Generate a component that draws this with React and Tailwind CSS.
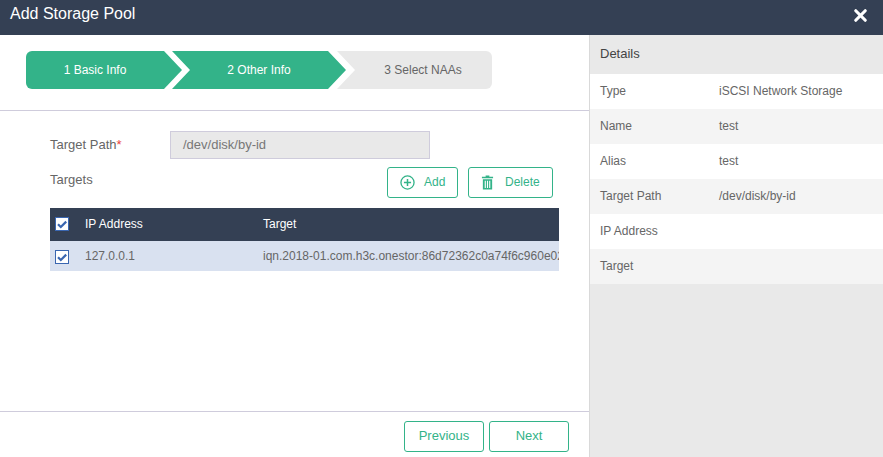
import { X } from "lucide-react";

const details = [
  ["Type", "iSCSI Network Storage"],
  ["Name", "test"],
  ["Alias", "test"],
  ["Target Path", "/dev/disk/by-id"],
  ["IP Address", ""],
  ["Target", ""],
];

function Checkbox() {
  return (
    <span className="flex h-[14px] w-[14px] items-center justify-center border border-[#3a66b0] bg-white">
      <svg viewBox="0 0 12 12" className="h-[12px] w-[12px]">
        <path d="M2 6.2 L4.8 9 L10.2 3.6" fill="none" stroke="#3a66b0" strokeWidth="2.2" />
      </svg>
    </span>
  );
}

function PlusIcon() {
  return (
    <svg viewBox="0 0 16 16" className="h-[15px] w-[15px]" fill="none" stroke="#33b389" strokeWidth="1.4">
      <circle cx="8" cy="8" r="7" />
      <path d="M8 4.2 V11.8 M4.2 8 H11.8" strokeWidth="1.6" />
    </svg>
  );
}

function TrashIcon() {
  return (
    <svg viewBox="0 0 14 16" className="h-[15px] w-[13px]" fill="#33b389">
      <path d="M5 0.5 H9 V1.8 H13 V3.4 H1 V1.8 H5 Z" />
      <path d="M2 4.5 H12 V15.5 H2 Z M4 6 V14 H5.2 V6 Z M6.4 6 V14 H7.6 V6 Z M8.8 6 V14 H10 V6 Z" fillRule="evenodd" />
    </svg>
  );
}

export default function App() {
  return (
    <div className="flex h-[457px] w-[883px] flex-col overflow-hidden bg-white font-['Liberation_Sans',Arial,sans-serif] text-[12px] text-[#666666]">
      <header className="flex h-[35px] shrink-0 items-center justify-between bg-[#344054] pl-[10px] pr-[14px] text-white">
        <h1 className="text-[16px] leading-[27px] mb-[8px]">Add Storage Pool</h1>
        <X size={19} strokeWidth={4} className="mb-[5px] -mr-[1px]" />
      </header>

      <div className="flex min-h-0 flex-1">
        <main className="flex w-[589px] shrink-0 flex-col">
          <div className="h-[76px] shrink-0 border-b border-[#cfccdc] pl-[26px] pt-[16px]">
            <div className="flex h-[38px] items-stretch">
              <div className="flex w-[156px] items-center justify-center rounded-l-[6px] bg-[#33b389] pr-[18px] text-white [clip-path:polygon(0_0,138px_0,156px_19px,138px_38px,0_38px)]">
                1 Basic Info
              </div>
              <div className="-ml-[10px] flex w-[174px] items-center justify-center bg-[#33b389] text-white [clip-path:polygon(0_0,156px_0,174px_19px,156px_38px,0_38px,18px_19px)]">
                2 Other Info
              </div>
              <div className="-ml-[9px] flex w-[155px] items-center justify-center rounded-r-[6px] bg-[#e9e9e9] pl-[17px] text-[#666666] [clip-path:polygon(0_0,155px_0,155px_38px,0_38px,18px_19px)]">
                3 Select NAAs
              </div>
            </div>
          </div>

          <div className="min-h-0 flex-1 pl-[50px] pr-[30px] pt-[20px]">
            <div className="flex h-[28px] items-center">
              <label className="w-[120px] text-[13px]">
                Target Path<span className="text-[#e8413c]">*</span>
              </label>
              <div className="flex h-[28px] w-[260px] items-center border border-[#cfccdc] bg-[#e9e9e9] pl-[12px] text-[13px] text-[#777777]">
                /dev/disk/by-id
              </div>
            </div>

            <div className="mt-[8px] flex h-[31px] items-start justify-between pr-[6px]">
              <span className="mt-[3px] text-[13px]">Targets</span>
              <div className="flex gap-[10px]">
                <button className="flex h-[31px] w-[71px] items-center gap-[9px] rounded-[3px] border border-[#33b389] pb-[1px] pl-[12px] text-[12px] text-[#33b389]">
                  <PlusIcon />
                  Add
                </button>
                <button className="flex h-[31px] w-[85px] items-center gap-[11px] rounded-[3px] border border-[#33b389] pb-[1px] pl-[12px] text-[12px] text-[#33b389]">
                  <TrashIcon />
                  Delete
                </button>
              </div>
            </div>

            <div className="mt-[10px] w-[509px] overflow-hidden">
              <div className="flex h-[33px] items-center bg-[#344054] text-white">
                <div className="flex w-[35px] shrink-0 pb-[1px] pl-[5px]">
                  <Checkbox />
                </div>
                <div className="w-[178px] shrink-0 pb-[2px]">IP Address</div>
                <div className="pb-[2px]">Target</div>
              </div>
              <div className="flex h-[30px] items-center bg-[#d9e1f0]">
                <div className="flex w-[35px] shrink-0 pl-[5px] pt-[2px]">
                  <Checkbox />
                </div>
                <div className="w-[178px] shrink-0">127.0.0.1</div>
                <div className="whitespace-nowrap">iqn.2018-01.com.h3c.onestor:86d72362c0a74f6c960e02a1</div>
              </div>
            </div>
          </div>

          <footer className="flex h-[46px] shrink-0 items-start justify-end gap-[5px] border-t border-[#cfccdc] pr-[20px] pt-[9px]">
            <button className="h-[31px] w-[80px] rounded-[3px] border border-[#33b389] pb-[1px] text-[13px] text-[#33b389]">Previous</button>
            <button className="h-[31px] w-[80px] rounded-[3px] border border-[#33b389] pb-[1px] text-[13px] text-[#33b389]">Next</button>
          </footer>
        </main>

        <aside className="flex-1 border-l border-[#d9d9d9] bg-[#e9e9e9]">
          <div className="flex h-[39px] items-center pb-[1px] pl-[10px] text-[13px] text-[#444444]">Details</div>
          {details.map(([label, value], i) => (
            <div key={label} className={`flex h-[35px] items-center pb-[2px] pl-[10px] ${i % 2 === 0 ? "bg-white" : "bg-[#f4f4f4]"}`}>
              <span className="w-[119px] shrink-0">{label}</span>
              <span>{value}</span>
            </div>
          ))}
        </aside>
      </div>
    </div>
  );
}
